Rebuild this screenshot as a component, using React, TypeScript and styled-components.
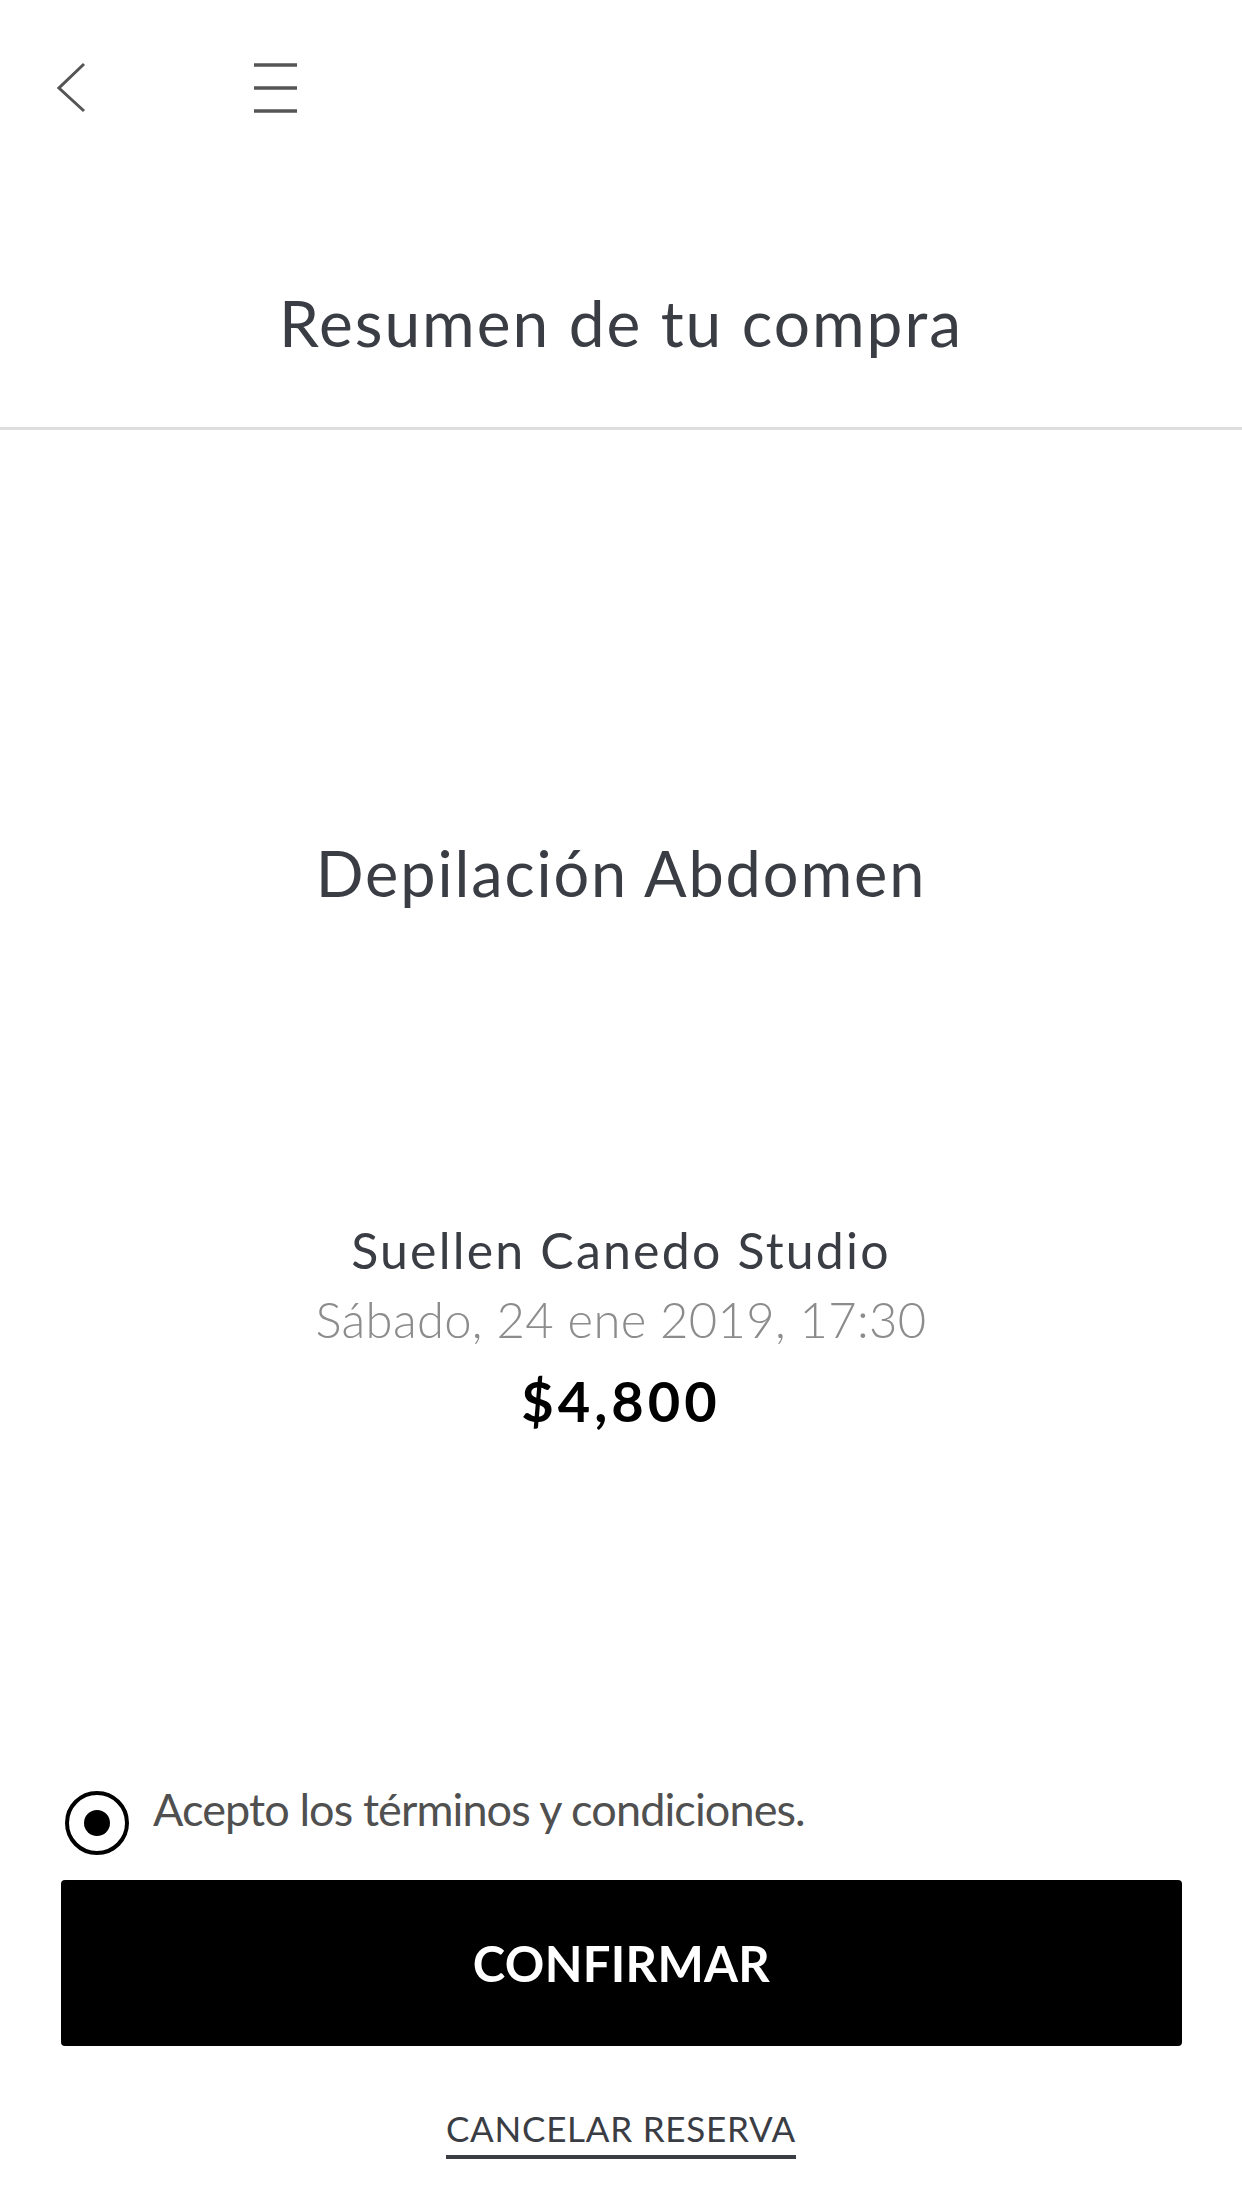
import styled, { createGlobalStyle } from 'styled-components';

const GlobalStyle = createGlobalStyle`
  html, body {
    margin: 0;
    padding: 0;
    background: #ffffff;
  }
  body {
    font-family: Lato, "Open Sans", "Noto Sans", sans-serif;
  }
`;

export default function App() {
  return (
    <>
      <GlobalStyle />
      <Page>
        <TopBar>
          <IconButton aria-label="Volver" $width={30}>
            <svg width="30" height="52" viewBox="0 0 30 52">
              <polyline
                points="27,2 2,26 27,49"
                fill="none"
                stroke="#555"
                strokeWidth="3"
              />
            </svg>
          </IconButton>
          <IconButton aria-label="Menú" $width={44}>
            <svg width="44" height="52" viewBox="0 0 44 52">
              <line x1="0" y1="3" x2="43" y2="3" stroke="#555" strokeWidth="3.5" />
              <line x1="0" y1="26" x2="43" y2="26" stroke="#555" strokeWidth="3.5" />
              <line x1="0" y1="49" x2="43" y2="49" stroke="#555" strokeWidth="3.5" />
            </svg>
          </IconButton>
        </TopBar>

        <TitleBar>
          <Title>Resumen de tu compra</Title>
        </TitleBar>

        <Summary>
          <ServiceName>Depilación Abdomen</ServiceName>
          <Details>
            <Studio>Suellen Canedo Studio</Studio>
            <DateText>Sábado, 24 ene 2019, 17:30</DateText>
            <Price>$4,800</Price>
          </Details>
        </Summary>

        <Footer>
          <TermsRow>
            <Radio>
              <RadioDot />
            </Radio>
            <TermsText>Acepto los términos y condiciones.</TermsText>
          </TermsRow>
          <ConfirmButton>CONFIRMAR</ConfirmButton>
          <CancelLink>CANCELAR RESERVA</CancelLink>
        </Footer>
      </Page>
    </>
  );
}

const Page = styled.div`
  width: 1242px;
  display: flex;
  flex-direction: column;
`;

const TopBar = styled.header`
  height: 176px;
  display: flex;
  align-items: center;
  padding-left: 57px;
  gap: 167px;
  box-sizing: border-box;
`;

const IconButton = styled.button<{ $width: number }>`
  width: ${(p) => p.$width}px;
  height: 52px;
  padding: 0;
  border: none;
  background: none;
  display: flex;
  align-items: center;
  justify-content: center;
`;

const TitleBar = styled.div`
  padding: 107px 0 64px;
  border-bottom: 3px solid #dedede;
  text-align: center;
`;

const Title = styled.h1`
  margin: 0;
  font-size: 64px;
  line-height: 80px;
  font-weight: 400;
  letter-spacing: 2px;
  color: #3a3d44;
`;

const Summary = styled.main`
  display: flex;
  flex-direction: column;
  align-items: center;
  text-align: center;
`;

const ServiceName = styled.h2`
  margin: 403px 0 0;
  font-size: 63px;
  line-height: 80px;
  font-weight: 400;
  letter-spacing: 1.9px;
  color: #3a3d44;
`;

const Details = styled.div`
  margin-top: 307px;
  display: flex;
  flex-direction: column;
  align-items: center;
`;

const Studio = styled.div`
  font-size: 50px;
  line-height: 60px;
  font-weight: 400;
  letter-spacing: 2.2px;
  color: #3a3d44;
`;

const DateText = styled.div`
  margin-top: 9px;
  font-size: 49px;
  line-height: 60px;
  font-weight: 300;
  letter-spacing: 0.3px;
  color: #8c8c8c;
`;

const Price = styled.div`
  margin-top: 17px;
  font-size: 56px;
  line-height: 70px;
  font-weight: 700;
  letter-spacing: 4px;
  color: #000;
`;

const Footer = styled.footer`
  margin-top: 355px;
  display: flex;
  flex-direction: column;
  align-items: center;
  padding-bottom: 48px;
`;

const TermsRow = styled.label`
  align-self: stretch;
  display: flex;
  align-items: flex-start;
  padding-left: 65px;
  gap: 24px;
`;

const Radio = styled.span`
  width: 64px;
  height: 64px;
  box-sizing: border-box;
  border: 4px solid #000;
  border-radius: 50%;
  display: flex;
  align-items: center;
  justify-content: center;
  flex-shrink: 0;
`;

const RadioDot = styled.span`
  width: 26px;
  height: 26px;
  border-radius: 50%;
  background: #000;
`;

const TermsText = styled.span`
  font-size: 45px;
  line-height: 36px;
  font-weight: 400;
  letter-spacing: -0.9px;
  color: #505050;
`;

const ConfirmButton = styled.button`
  margin-top: 25px;
  width: 1121px;
  height: 166px;
  margin-left: 1px;
  border: none;
  border-radius: 4px;
  background: #000;
  color: #fff;
  font-family: Lato, "Open Sans", sans-serif;
  font-size: 49px;
  font-weight: 700;
  letter-spacing: 0.3px;
`;

const CancelLink = styled.a`
  margin-top: 60px;
  display: inline-block;
  font-size: 35px;
  line-height: 44px;
  font-weight: 400;
  letter-spacing: 0.75px;
  color: #3a3d44;
  padding-bottom: 5px;
  border-bottom: 4px solid #3a3d44;
`;
